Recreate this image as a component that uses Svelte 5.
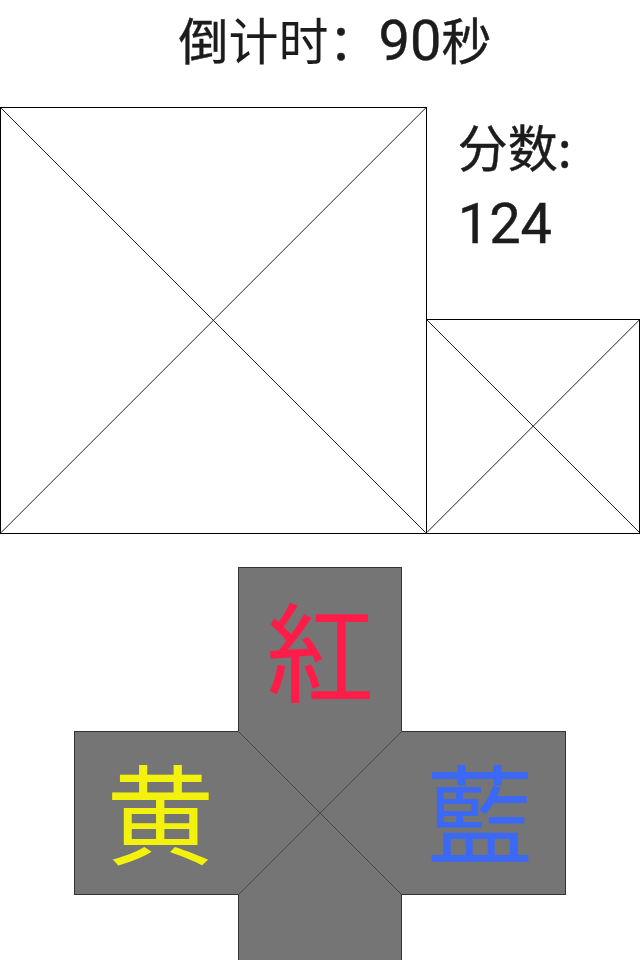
<script>
  const seconds = 90;
  const score = 124;
  const pads = [
    { id: 'red', label: '紅' },
    { id: 'yellow', label: '黄' },
    { id: 'blue', label: '藍' },
    { id: 'blank', label: '' }
  ];
</script>

{#snippet frame()}
  <svg class="frame" viewBox="0 0 100 100" preserveAspectRatio="none" aria-hidden="true">
    <path d="M0 0L100 100M100 0L0 100" />
  </svg>
{/snippet}

<main class="game">
  <header><h1>倒<span class="thin">计时</span>：<span class="digits">{seconds}</span>秒</h1></header>

  <section class="play">
    <div class="board">{@render frame()}</div>
    <aside>
      <p class="score">分数:<br /><span class="digits">{score}</span></p>
      <div class="next">{@render frame()}</div>
    </aside>
  </section>

  <section class="controls">
    {#each pads as pad (pad.id)}
      <button type="button" class="pad {pad.id}" aria-label={pad.label || 'blank'}>{pad.label}</button>
    {/each}
    <div class="center">{@render frame()}</div>
  </section>
</main>

<style>
  :global(body) {
    margin: 0;
    background: #fff;
  }
  .game {
    height: 100vh;
    overflow: hidden;
    color: #1c1c1c;
    font-family: "Noto Sans CJK SC", sans-serif;
  }
  .game * {
    box-sizing: border-box;
  }
  header {
    height: 107px;
    padding-left: 30px;
    text-align: center;
  }
  h1,
  .score {
    margin: 0;
    font-size: 50px;
    font-weight: 400;
    line-height: 76px;
    white-space: nowrap;
    -webkit-text-stroke: 0.4px #1c1c1c;
    stroke-linejoin: round;
  }
  .thin {
    -webkit-text-stroke: 0;
  }
  .digits {
    font-family: Roboto, sans-serif;
    font-size: 56px;
    line-height: 1;
  }
  .play {
    display: grid;
    grid-template-columns: 2fr 1fr;
  }
  .board,
  .next {
    aspect-ratio: 1;
    border: 1px solid #000;
  }
  aside {
    display: flex;
    flex-direction: column;
    justify-content: space-between;
    margin-left: -1px;
  }
  .score {
    padding-left: 32px;
  }
  .frame {
    display: block;
    width: 100%;
    height: 100%;
  }
  .frame path {
    fill: none;
    stroke: #222;
    stroke-width: 1px;
    vector-effect: non-scaling-stroke;
  }
  .controls {
    display: grid;
    grid-template-columns: repeat(3, 1fr);
    grid-template-areas: ". red ." "yellow center blue" ". blank .";
    width: 77%;
    margin: 33px auto 0;
  }
  .pad,
  .center {
    aspect-ratio: 1;
    background: #757575;
  }
  .pad {
    min-width: 0;
    margin: 0;
    padding: 0 0 4px;
    border: 1px solid #333;
    border-radius: 0;
    font-family: "Noto Sans CJK JP", sans-serif;
    font-size: 108px;
    font-weight: 400;
    line-height: 1;
    -webkit-text-stroke: 0;
    cursor: pointer;
  }
  .red {
    grid-area: red;
    border-bottom: 0;
    color: #ff1c48;
  }
  .yellow {
    grid-area: yellow;
    padding: 0 0 8px 8px;
    border-right: 0;
    color: #f2f20d;
  }
  .blue {
    grid-area: blue;
    padding: 0 8px 8px 0;
    border-left: 0;
    color: #3b69f5;
  }
  .blank {
    grid-area: blank;
    border-top: 0;
  }
  .center {
    grid-area: center;
  }
  .center path {
    stroke: #444;
  }
</style>
